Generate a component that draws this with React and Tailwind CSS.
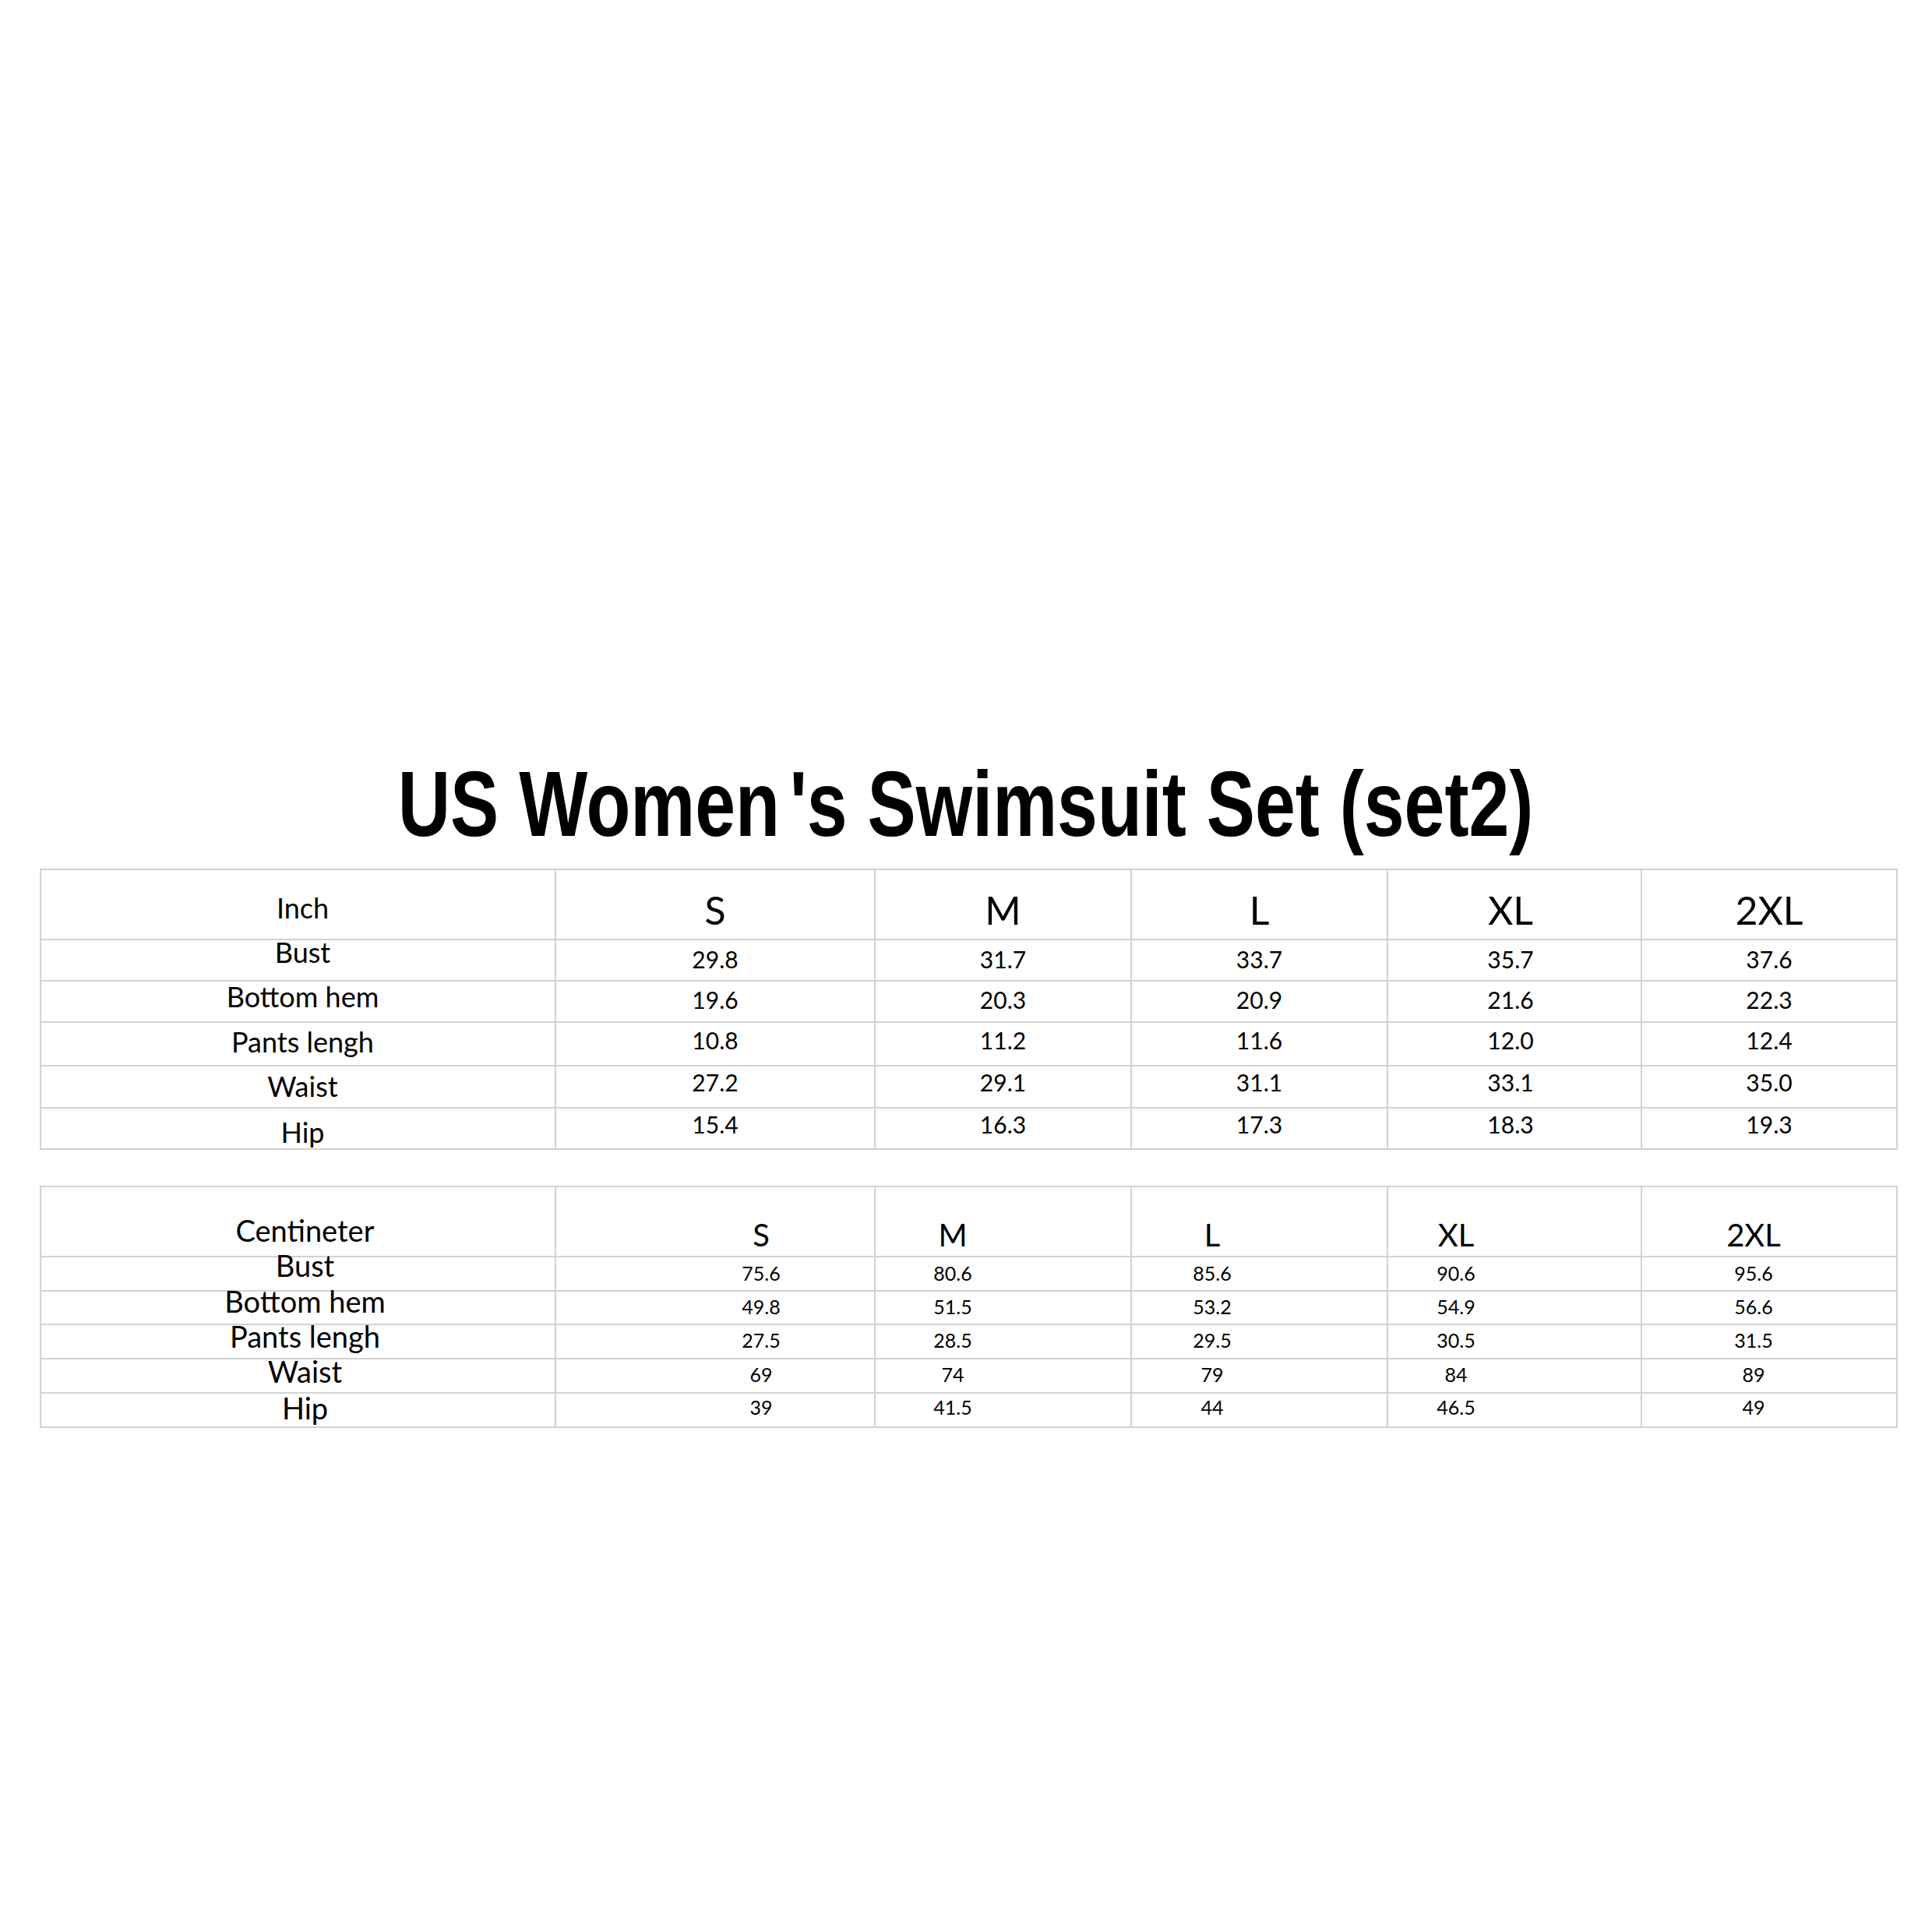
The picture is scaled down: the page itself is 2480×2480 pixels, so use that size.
const SIZES = ['S', 'M', 'L', 'XL', '2XL'];

const INCH = [
  ['Bust', ['29.8', '31.7', '33.7', '35.7', '37.6']],
  ['Bottom hem', ['19.6', '20.3', '20.9', '21.6', '22.3']],
  ['Pants lengh', ['10.8', '11.2', '11.6', '12.0', '12.4']],
  ['Waist', ['27.2', '29.1', '31.1', '33.1', '35.0']],
  ['Hip', ['15.4', '16.3', '17.3', '18.3', '19.3']],
];

const CM = [
  ['Bust', ['75.6', '80.6', '85.6', '90.6', '95.6']],
  ['Bottom hem', ['49.8', '51.5', '53.2', '54.9', '56.6']],
  ['Pants lengh', ['27.5', '28.5', '29.5', '30.5', '31.5']],
  ['Waist', ['69', '74', '79', '84', '89']],
  ['Hip', ['39', '41.5', '44', '46.5', '49']],
];

// per-table geometry: row heights and text offsets, measured off the chart
const INCH_LAYOUT = {
  header: { h: 'h-[90px]', label: 'pt-[38px]', size: 'pt-[41px]' },
  rows: [
    { h: 'h-[53px]', label: 'pt-[5px]', num: 'pt-[14px]' },
    { h: 'h-[53px]', label: 'pt-[9px]', num: 'pt-[13px]' },
    { h: 'h-[56px]', label: 'pt-[14px]', num: 'pt-[12px]' },
    { h: 'h-[54px]', label: 'pt-[15px]', num: 'pt-[10px]' },
    { h: 'h-[53px]', label: 'pt-[20px]', num: 'pt-[10px]' },
  ],
  labelText: 'text-[36px] pl-[12px]',
  sizeText: 'text-[50px]',
  numText: 'text-[30px]',
  cols: ['', '', '', 'pr-[10px]', ''],
};

const CM_LAYOUT = {
  header: { h: 'h-[90px]', label: 'pt-[45px]', size: 'pt-[51px]' },
  rows: [
    { h: 'h-[44px]', label: 'pt-0', num: 'pt-[10px]' },
    { h: 'h-[43px]', label: 'pt-[2px]', num: 'pt-[9px]' },
    { h: 'h-[44px]', label: 'pt-[4px]', num: 'pt-[9px]' },
    { h: 'h-[44px]', label: 'pt-[5px]', num: 'pt-[9px]' },
    { h: 'h-[44px]', label: 'pt-[8px]', num: 'pt-[7px]' },
  ],
  labelText: 'text-[38px] pl-[18px]',
  sizeText: 'text-[40px]',
  numText: 'text-[25px]',
  // the cm values sit off-centre in their cells
  cols: ['pl-[118px]', 'pr-[129px]', 'pr-[121px]', 'pr-[150px]', 'pr-[40px]'],
};

const cell = 'flex justify-center border-r-2 border-b-2 border-[#d2d2d2] leading-[20px] whitespace-nowrap';
const grid = 'grid grid-cols-[661px_410px_329px_329px_326px_328px]';

function SizeTable({ unit, data, layout, className }) {
  return (
    <div className={`ml-[51px] w-[2385px] border-t-2 border-l-2 border-[#d2d2d2] ${className}`}>
      <div className={grid}>
        <div className={`${cell} ${layout.header.h} ${layout.header.label} ${layout.labelText}`}>{unit}</div>
        {SIZES.map((s, i) => (
          <div key={s} className={`${cell} ${layout.header.h} ${layout.header.size} ${layout.sizeText} ${layout.cols[i]}`}>
            {s}
          </div>
        ))}
      </div>
      {data.map(([label, values], r) => {
        const row = layout.rows[r];
        return (
          <div key={label} className={grid}>
            <div className={`${cell} ${row.h} ${row.label} ${layout.labelText}`}>{label}</div>
            {values.map((v, i) => (
              <div key={i} className={`${cell} ${row.h} ${row.num} ${layout.numText} ${layout.cols[i]}`}>
                {v}
              </div>
            ))}
          </div>
        );
      })}
    </div>
  );
}

export default function App() {
  return (
    <div className="w-[2480px] h-[2480px] bg-white pt-[973px] text-black font-['Lato','Liberation_Sans',sans-serif]">
      <h1 className="text-center text-[118px] leading-none font-bold font-['Liberation_Sans_Narrow','Liberation_Sans',sans-serif]">
        <span className="inline-block scale-x-[0.79] whitespace-nowrap">
          US Women<span className="ml-[16px]">'s</span> Swimsuit Set (set2)
        </span>
      </h1>
      <SizeTable unit="Inch" data={INCH} layout={INCH_LAYOUT} className="mt-[24px]" />
      <SizeTable unit="Centineter" data={CM} layout={CM_LAYOUT} className="mt-[46px]" />
    </div>
  );
}
